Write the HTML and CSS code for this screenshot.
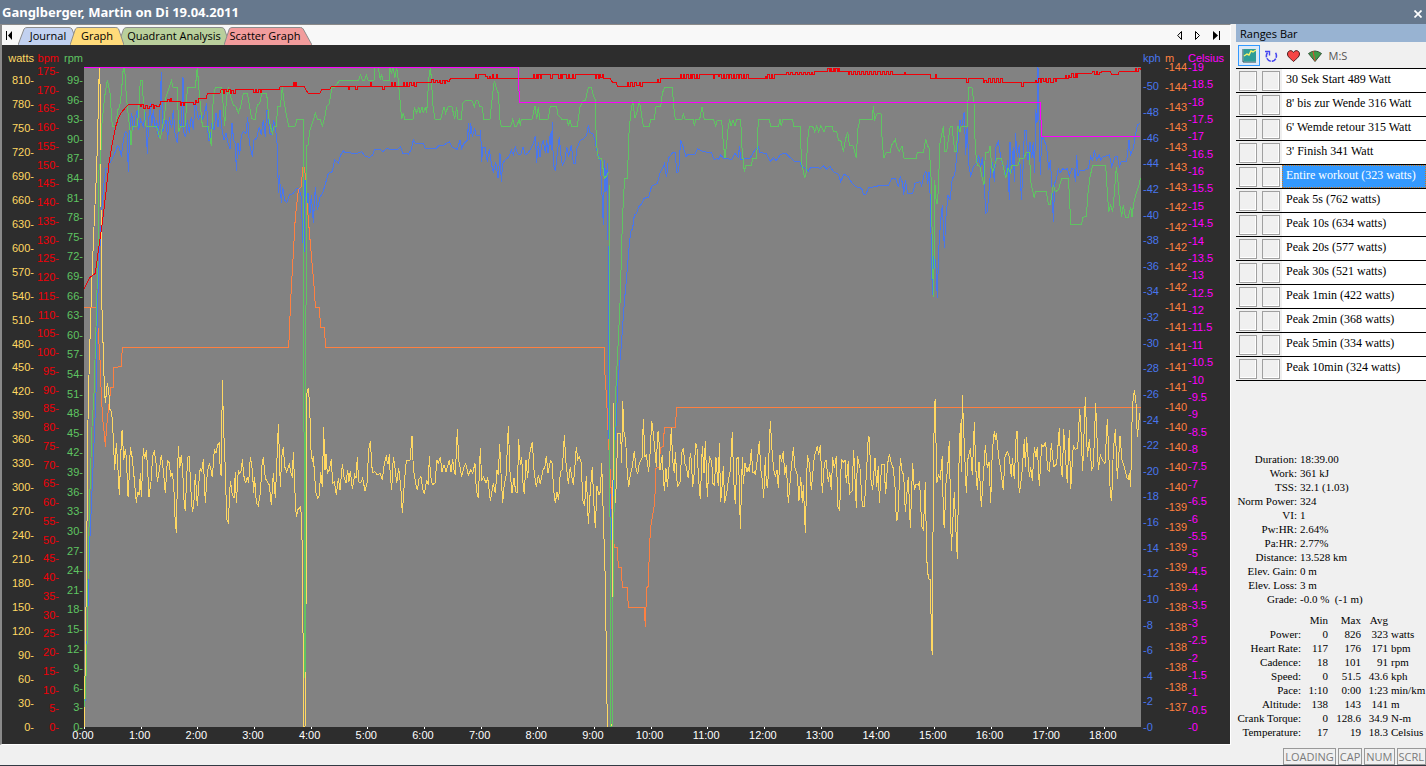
FILE: index.html
```html
<!DOCTYPE html>
<html lang="en">
<head>
  <meta charset="UTF-8">
  <meta name="viewport" content="width=device-width, initial-scale=1.0">
  <title>Ganglberger, Martin on Di 19.04.2011</title>
  <link rel="stylesheet" href="styles.css">
</head>
<body>

  <header class="titlebar">
    <h1>Ganglberger, Martin on Di 19.04.2011</h1>
    <button class="close" aria-label="Close">
      <svg width="8" height="8" viewBox="0 0 8 8"><path d="M0.5 0.5 L7.5 7.5 M7.5 0.5 L0.5 7.5" stroke="#fff" stroke-width="1.7"/></svg>
    </button>
  </header>

  <div class="workspace">
    <main class="panel">
      <nav class="tabbar">
        <button class="nav-btn first" aria-label="First tab">
          <svg width="7" height="9" viewBox="0 0 7 9"><path d="M0 0h1v9H0zM6 0v9L2 4.500z" fill="#000"/></svg>
        </button>
        <button class="tab journal"><svg viewBox="0 0 100 18" preserveAspectRatio="none"><path d="M0 18 L10 2 Q12 0.500 15 0.500 H85 Q88 0.500 90 2 L100 18"/></svg><span>Journal</span></button>
        <button class="tab graph"><svg viewBox="0 0 100 18" preserveAspectRatio="none"><path d="M0 18 L10 2 Q12 0.500 15 0.500 H85 Q88 0.500 90 2 L100 18"/></svg><span>Graph</span></button>
        <button class="tab quadrant"><svg viewBox="0 0 100 18" preserveAspectRatio="none"><path d="M0 18 L5 2 Q6 0.500 8 0.500 H92 Q94 0.500 95 2 L100 18"/></svg><span>Quadrant Analysis</span></button>
        <button class="tab scatter"><svg viewBox="0 0 100 18" preserveAspectRatio="none"><path d="M0 18 L6 2 Q7 0.500 9 0.500 H87 Q89 0.500 90 2 L100 18"/></svg><span>Scatter Graph</span></button>
        <div class="tab-scroll">
          <button class="nav-btn" aria-label="Previous tab">
            <svg width="6" height="9" viewBox="0 0 6 9"><path d="M4.500 0.500v8L0.700 4.500z" fill="none" stroke="#000"/></svg>
          </button>
          <button class="nav-btn" aria-label="Next tab">
            <svg width="6" height="9" viewBox="0 0 6 9"><path d="M0.500 0.500v8L4.500 4.500z" fill="none" stroke="#000"/></svg>
          </button>
          <button class="nav-btn" aria-label="Last tab">
            <svg width="7" height="9" viewBox="0 0 7 9"><path d="M6 0h1v9H6zM0 0v9L5 4.500z" fill="#000"/></svg>
          </button>
        </div>
      </nav>

      <div class="chart">
        <div class="axes left">
          <div class="axis watts"><div class="unit">watts</div><div class="scale" id="watts"></div></div>
          <div class="axis bpm"><div class="unit">bpm</div><div class="scale" id="bpm"></div></div>
          <div class="axis rpm"><div class="unit">rpm</div><div class="scale" id="rpm"></div></div>
        </div>

        <svg class="plot" viewBox="0 0 3171 1980" preserveAspectRatio="none">
          <!-- 0:00 to 6:10 -->
          <g transform="translate(-12 -21)">
            <polyline class="altitude" points="12,742 52,742 52,770 60,900 62,960 66,1040 70,1100 73,1120 76,1160 80,1100 86,1040 91,1000 91,982 100,982 102,922 124,920 127,862 626,862 628,820 632,720 640,580 646,470 655,390 664,380 668,322 674,322 678,390 686,490 692,562 697,620 704,700 706,742 718,742 722,802 734,802 736,862 1050,862"/>
            <polyline class="speed" points="14,1950 18,1850 26,1570 30,1430 38,1250 48,1000 52,760 56,640 62,520 66,440 72,370 78,325 84,325 88,310 95,300 104,280 113,258 118,262 124,290 130,240 136,215 141,218 145,335 150,200 155,158 160,210 167,170 172,150 176,210 182,180 190,200 196,155 202,283 206,180 211,130 215,200 220,150 225,205 230,180 235,230 240,150 244,35 248,215 254,195 258,180 263,240 268,170 275,205 280,150 285,220 292,250 297,180 304,205 309,50 312,220 317,232 322,180 328,218 334,170 340,210 345,130 350,145 355,180 360,165 366,180 372,165 380,130 385,240 390,240 396,190 402,210 408,160 414,200 420,150 426,208 432,240 438,220 444,250 451,268 456,190 461,240 466,250 469,332 474,250 479,285 484,225 490,215 498,220 503,170 508,250 517,290 522,240 530,235 538,200 544,225 550,180 556,230 560,150 565,150 568,220 576,225 580,180 586,200 592,260 595,400 598,345 604,428 608,380 614,420 620,428 628,405 640,400 650,385 656,385 664,410 668,540 672,580 675,360 680,440 684,400 690,460 694,405 700,488 706,380 712,450 720,410 728,400 735,375 745,340 757,335 764,300 775,310 782,285 790,272 795,278 830,280 846,275 853,287 868,292 878,285 884,268 900,268 908,275 920,266 950,270 962,260 968,280 985,282 994,268 1000,240 1006,250 1030,250 1035,265 1050,265"/>
            <polyline class="power" points="12,2001 16,1800 20,1490 24,1080 28,900 36,650 42,500 48,370 52,260 56,100 58,20 61,95 63,440 65,720 67,780 73,980 76,1030 82,970 86,990 90,1048 95,1055 100,1135 104,1230 109,1150 113,1210 118,1305 125,1115 127,1113 131,1200 136,1168 140,1200 143,1305 145,1310 151,1160 157,1195 163,1260 169,1328 173,1295 177,1305 181,1240 184,1312 190,1165 194,1198 199,1170 203,1230 207,1310 213,1265 218,1188 223,1175 228,1210 232,1265 238,1230 244,1185 250,1230 256,1300 262,1203 268,1208 272,1250 276,1240 281,1270 285,1370 289,1420 292,1270 295,1158 299,1225 304,1185 308,1230 313,1340 316,1352 320,1250 324,1190 328,1190 332,1280 337,1357 341,1340 346,1242 352,1338 358,1250 361,1223 365,1235 370,1198 376,1328 382,1235 388,1210 392,1225 397,1252 403,1170 408,1180 413,1155 418,1150 421,1240 424,1245 427,960 431,1110 436,1230 440,1378 445,1388 451,1262 457,1305 462,1315 466,1235 469,1330 475,1230 479,1240 484,1230 487,1198 491,1245 497,1270 502,1250 506,1268 511,1190 517,1230 521,1298 524,1252 529,1328 535,1337 541,1300 547,1200 550,1195 556,1255 562,1265 568,1275 574,1335 580,1240 586,1315 592,1170 595,1093 598,1180 601,1282 605,1190 610,1160 614,1220 620,1235 628,1213 634,1245 637,1250 640,1175 644,1280 649,1372 653,1350 661,1342 665,1370 668,1565 671,2001 675,2001 679,1515 681,1000 685,983 689,1040 693,1170 697,1205 700,1188 704,1250 708,1300 713,1315 718,1305 722,1235 727,1280 731,1102 735,1230 738,1182 742,1240 748,1230 754,1198 758,1270 763,1265 769,1305 775,1255 780,1290 787,1213 792,1250 798,1270 803,1230 807,1265 811,1232 817,1288 824,1245 828,1255 832,1192 836,1265 842,1268 848,1255 855,1292 861,1270 866,1170 871,1143 877,1238 885,1235 891,1245 900,1240 907,1260 913,1210 919,1186 922,1210 925,1210 928,1183 931,1250 935,1290 940,1190 946,1230 950,1270 956,1225 962,1275 967,1360 973,1270 979,1200 990,1200 996,1128 1000,1225 1007,1270 1012,1290 1017,1258 1023,1250 1028,1285 1033,1303 1040,1260 1045,1275 1048,1187 1050,1220"/>
            <polyline class="cadence" points="14,1940 18,1850 22,1720 24,1560 28,1350 36,1100 42,1000 48,800 54,580 57,330 62,300 66,190 74,110 82,60 90,100 97,200 108,198 113,150 119,140 124,100 130,22 134,22 139,110 145,170 150,210 153,255 157,200 172,198 176,150 181,62 187,62 190,130 197,198 230,200 241,238 247,200 254,170 258,110 274,62 279,82 292,82 296,215 302,200 316,198 322,83 346,82 352,22 357,90 367,198 385,200 394,258 400,110 406,83 424,83 427,100 434,198 440,110 446,82 452,110 460,135 468,140 475,160 482,140 490,100 502,100 508,135 515,175 525,180 532,135 539,130 545,100 560,100 566,170 571,198 577,220 583,198 589,198 593,140 601,140 607,82 613,130 622,180 626,200 646,198 650,178 670,178 671,1100 673,1130 675,1855 677,1000 680,255 684,255 690,210 700,180 706,160 712,178 720,178 727,198 733,178 740,140 748,130 756,82 763,82 778,62 836,60 842,44 847,60 854,60 859,44 864,60 882,60 885,22 895,22 901,60 904,42 909,60 928,60 930,22 934,40 940,22 944,55 950,22 955,62 960,120 965,178 970,160 974,178 999,178 1003,140 1010,160 1016,140 1020,160 1026,140 1030,160 1036,140 1040,160 1046,60 1051,22"/>
            <path class="heart" d="M12 686L30 652L46 640L54 580L61 530L68 480L78 395L87 310L97 250L107 200L115 175L124 158L134 146L145 133H180v6h5v-6h5v12h5v-10h6v10h6v-6h6v-6h6v12h5v-8h6v2h8v-6h4v-8H262v-8h5v8h4v-10h4v10H300v10h4v-8h6v8h4v-8h6v-1H340v6h5v-10h5v6h4v-12H378L383 100H420L424 88h5v12h5v-12h6v6h5v-6h5v12h5v-8h5v8h6v-12H520v10h5v-10h5v10h5v-10h5v8h5v-8H598L601 79H640V67h3v12h3v-12h4v12H672L684 100H720L725 88H750L754 79H805v9h4v-9h18v9h4v-9H870V68h4v11H908v9h4v-9H934V68h4v11h4v-11h5v11H970v-11h4v11h4v-11h5v11h6v-11h4v8h6v-8h5v11h6v-11H1050"/>
            <path class="temperature" d="M12 22H1050"/>
          </g>
          <!-- 6:10 to 12:20 -->
          <g transform="translate(1038 -21)">
            <polyline class="altitude" points="0,862 522,862 524,930 530,1020 534,1110 538,1190 544,1300 550,1435 553,1462 562,1462 565,1522 574,1522 577,1582 592,1582 595,1642 643,1642 646,1702 648,1642 650,1582 655,1580 658,1470 662,1400 674,1330 678,1225 688,1222 691,1162 700,1160 703,1102 736,1102 740,1042 1050,1042"/>
            <polyline class="speed" points="0,265 18,265 25,258 40,256 50,250 58,245 66,262 82,268 90,240 95,265 102,250 112,240 115,190 119,240 122,190 127,230 134,205 138,225 150,225 152,210 155,305 158,262 165,262 172,305 178,268 184,310 190,338 197,305 204,355 210,280 214,365 218,310 228,297 236,292 244,270 250,285 256,262 263,282 272,285 279,260 286,285 295,278 304,262 310,250 316,228 320,308 325,245 330,290 335,255 340,240 346,280 350,240 354,280 361,220 364,270 367,185 370,315 376,333 383,270 388,230 392,280 397,315 405,300 410,260 416,290 424,255 430,310 436,310 440,268 450,242 460,236 470,225 475,195 480,218 488,220 494,235 500,270 510,300 515,380 520,495 524,300 528,395 532,310 534,540 535,900 538,1250 542,1350 546,1440 552,1180 558,1100 564,960 572,880 584,715 590,650 596,575 602,515 608,505 613,465 620,460 626,440 636,430 642,415 656,412 665,378 682,370 690,340 703,312 710,352 715,295 728,278 736,278 740,338 746,335 752,240 760,262 768,290 775,282 795,282 803,266 820,275 844,278 853,300 860,295 866,298 872,285 880,295 905,298 915,280 925,292 928,258 933,300 945,295 960,295 975,270 985,260 990,278 1008,280 1014,292 1022,305 1030,292 1038,303 1050,285"/>
            <polyline class="power" points="0,1220 4,1265 8,1273 15,1270 21,1200 25,1210 31,1190 36,1235 42,1215 48,1235 54,1215 58,1200 63,1235 68,1197 72,1230 76,1245 82,1108 86,1200 90,1220 95,1250 102,1220 107,1210 115,1245 122,1230 128,1240 135,1210 139,1290 145,1315 151,1165 155,1260 161,1250 168,1270 173,1252 181,1322 190,1270 196,1300 201,1230 205,1245 209,1153 213,1240 218,1328 223,1270 228,1250 235,1098 240,1235 246,1298 252,1255 257,1295 262,1298 266,1138 271,1215 275,1190 279,1270 283,1303 288,1200 293,1255 298,1185 307,1145 312,1230 319,1282 325,1245 331,1272 340,1225 344,1225 349,1187 354,1238 361,1203 366,1208 371,1290 376,1330 381,1295 386,1320 391,1235 397,1228 403,1126 408,1210 415,1272 421,1220 425,1250 430,1275 435,1215 439,1160 443,1200 448,1190 454,1208 458,1320 464,1337 469,1247 475,1393 481,1290 487,1220 491,1320 496,1405 501,1278 507,1305 511,1295 515,1208 520,1370 526,1565 532,2001 546,2001 548,1515 550,1028 553,1355 559,1275 563,1120 572,1122 575,1210 578,1022 582,1115 587,1140 591,1225 596,1282 601,1245 607,1220 613,1172 618,1225 623,1243 628,1210 636,1195 640,1078 645,1190 649,1185 656,1235 661,1170 665,1083 670,1120 674,1165 679,1220 683,1117 686,1115 690,1230 697,1185 700,1250 703,1293 708,1225 712,1280 718,1210 724,1105 728,1200 733,1240 736,1175 742,1280 750,1268 755,1180 760,1165 765,1212 769,1220 775,1255 781,1180 784,1200 788,1282 792,1245 797,1148 801,1165 806,1260 811,1318 817,1158 822,1240 826,1142 832,1312 838,1190 845,1203 849,1270 853,1275 858,1192 862,1250 865,1278 868,1150 872,1325 877,1270 880,1217 884,1328 890,1300 895,1262 901,1230 907,1117 911,1260 916,1333 921,1195 925,1192 928,1270 931,1408 937,1192 940,1272 945,1210 951,1235 955,1222 958,1237 964,1168 968,1238 973,1235 976,1245 982,1200 988,1143 992,1225 997,1260 1001,1315 1006,1190 1009,1275 1013,1283 1018,1155 1021,1083 1026,1170 1031,1230 1036,1250 1041,1230 1045,1285 1050,1185"/>
            <polyline class="cadence" points="0,22 4,50 8,130 15,178 32,178 42,140 47,160 54,140 66,140 74,178 80,140 84,178 94,178 98,130 106,122 126,122 133,140 138,122 144,122 150,140 156,140 162,178 180,178 188,100 193,62 198,82 205,100 210,180 214,200 242,200 248,178 254,198 260,198 268,178 271,198 274,178 306,178 315,138 320,178 325,140 329,178 354,178 361,140 380,140 384,165 396,178 412,178 415,198 420,180 425,198 442,198 450,140 460,122 466,122 475,82 484,82 488,100 496,120 499,250 505,295 515,295 523,355 528,350 534,338 537,338 538,1100 541,1500 542,2001 546,2001 548,1700 556,1020 562,900 571,710 575,550 580,420 584,355 592,355 597,220 602,160 608,122 615,175 620,160 628,122 634,160 640,198 658,198 662,178 673,178 678,140 692,140 697,100 704,82 727,82 731,140 736,178 756,178 760,160 765,178 790,178 793,198 797,178 809,178 816,140 823,178 850,178 857,198 862,180 875,180 880,250 885,295 890,250 895,198 899,178 903,198 909,180 915,198 920,178 932,178 936,265 943,335 947,317 964,317 968,295 980,295 985,178 1018,178 1022,198 1046,198 1050,178"/>
            <path class="heart" d="M0 67h4v-10h6v10h6v-6h6v6h5v-6h5v8h5v-8h5v8h5v-8h5v4h5v-6h5v-4H136V44h4v11h6v-11H165v5h6v6H178v-6h4v6h4v-11h4v11h8v-11h5v11H310V44h4v11h4v-11h4v11h4v-11h4v11h4v-11h28v11h4v-11h20v11h4v-11h4v11h4v-11h12v11h4v-11h4v11h8v-11h4v11h6v-11H496v11h4v-11h4v11h4v-11h4v8h4v-8h4v11H540L548 67H558L563 79H592V67h4v12h4v-12h8v12h6v-12h5v8h8v-8h5v12h5v-12H682v-10h4v10h4v-12H750V44h4v11h6v-11h4v11h6v-11h4v11h6v-11h4v11h4v-11h4v11h6v-11h4v11h6v-11H850v11h4v-11h10v6h5v-6h5v11h5v-11h5v11h5v-11h5v11h5v-11h5v11h5v-11h5v11h5v-11h5v11h5v-11h5v11h5v-11h5v11h5v-11h5v11H1005v-6h4v6h4v-11h5v11h6v-11h4v11h4v-11H1050"/>
            <path class="temperature" d="M0 22H265L268 127H1050"/>
          </g>
          <!-- 12:20 to 18:39 -->
          <g transform="translate(2088 -21)">
            <path class="altitude" d="M0 1042H1083"/>
            <polyline class="speed" points="0,283 18,280 30,292 42,303 60,305 66,322 78,325 85,333 92,322 110,322 122,325 130,318 140,328 150,318 160,335 175,342 182,365 192,342 205,350 215,368 228,380 245,385 250,402 258,402 266,382 290,380 295,375 325,375 335,356 347,356 355,382 361,350 368,370 371,405 376,360 383,400 398,402 405,370 412,368 420,365 425,378 432,345 438,335 443,372 447,335 450,400 453,520 457,705 462,590 467,600 472,715 476,570 482,480 487,435 493,565 498,470 504,405 510,420 517,355 524,345 530,290 536,230 540,180 545,200 553,155 557,285 562,190 566,310 572,350 580,320 590,310 596,285 602,320 607,290 612,350 617,460 622,455 628,380 632,330 638,305 643,365 648,260 655,245 662,290 670,320 676,350 683,300 688,420 690,245 694,340 700,260 703,365 706,220 712,290 718,255 724,420 730,310 733,210 738,210 744,300 750,245 755,295 760,245 764,340 767,148 771,190 774,22 777,180 781,345 785,230 792,240 800,260 806,330 811,300 816,380 820,485 824,370 830,355 835,325 840,340 848,325 855,330 862,325 868,348 876,325 883,330 886,365 890,285 894,348 900,330 915,330 925,325 932,290 938,300 943,270 950,300 958,285 962,300 970,290 988,285 995,320 1005,290 1012,290 1018,320 1024,303 1040,305 1047,240 1051,285 1060,265 1066,225 1072,195 1080,190"/>
            <polyline class="power" points="0,1185 5,1205 10,1173 14,1245 19,1215 25,1328 32,1245 40,1162 45,1225 52,1245 57,1322 62,1250 67,1328 70,1275 76,1418 82,1185 88,1210 94,1290 103,1190 112,1158 116,1185 121,1155 127,1300 133,1210 138,1200 145,1265 149,1235 154,1290 158,1192 163,1225 169,1187 174,1340 179,1352 184,1198 190,1208 195,1200 199,1270 205,1202 208,1302 216,1293 221,1170 229,1345 232,1188 240,1225 247,1338 253,1340 259,1245 265,1128 268,1135 273,1260 278,1290 285,1193 290,1282 295,1217 298,1328 305,1212 312,1212 317,1303 323,1210 328,1183 334,1210 340,1225 345,1280 349,1382 353,1378 358,1270 361,1195 367,1240 371,1240 376,1357 385,1250 391,1405 398,1210 403,1290 408,1272 415,1275 419,1267 425,1400 430,1410 436,1267 440,1495 445,1555 451,1560 455,1760 457,1784 458,1550 461,1170 464,1025 466,1022 470,1270 475,1245 481,1255 487,1187 490,1370 493,1405 498,1270 503,1225 508,1143 512,1365 514,1472 518,1390 523,1297 527,1395 532,1496 536,1240 541,1090 544,1235 547,1005 551,1110 556,1230 559,1300 563,1200 571,1165 577,1245 583,1087 587,1220 592,1290 597,1205 604,1340 610,1250 616,1155 622,1225 627,1205 632,1328 637,1170 643,1113 646,1140 649,1120 656,1190 661,1220 670,1290 675,1190 682,1175 688,1190 694,1252 697,1195 703,1257 709,1113 712,1114 715,1250 718,1300 725,1250 733,1138 736,1222 740,1132 748,1250 752,1220 757,1262 763,1162 768,1190 772,1162 778,1277 785,1155 790,1160 797,1147 803,1230 808,1233 814,1150 821,1220 830,1212 838,1103 842,1210 847,1252 851,1108 857,1200 862,1270 868,1110 872,1288 880,1155 885,1168 893,1165 899,1048 903,1115 908,1233 916,1012 922,1190 928,1138 935,1228 940,1220 947,1030 950,1110 955,1230 961,1185 967,1200 975,1210 982,1078 987,1200 991,1305 995,1322 1000,1170 1006,1108 1012,1258 1020,1127 1026,1200 1033,1220 1040,1252 1045,1258 1048,1238 1052,1280 1057,1040 1063,990 1068,1030 1072,1132 1079,1060"/>
            <polyline class="cadence" points="0,178 4,198 8,178 38,178 41,198 60,198 65,310 74,355 78,340 83,240 88,198 98,200 104,215 110,198 116,215 122,198 132,215 138,198 157,198 160,215 170,215 175,240 182,240 190,275 196,240 203,215 208,255 220,258 229,295 233,210 240,178 277,178 280,138 284,178 292,160 303,160 306,230 311,295 318,278 330,278 335,255 346,238 350,258 358,275 366,258 372,295 409,295 412,278 430,278 437,238 443,258 448,265 453,350 458,600 460,710 463,590 464,360 469,430 473,430 480,250 490,198 495,275 500,275 511,198 516,198 524,275 529,275 534,198 540,215 544,198 562,198 565,83 576,83 582,130 586,270 592,315 600,320 606,350 612,375 616,278 626,278 630,258 637,338 643,320 650,295 664,295 670,320 677,355 684,325 692,340 694,315 714,315 720,295 732,295 738,278 748,278 753,370 763,415 766,395 799,395 805,432 811,432 820,375 826,395 835,390 845,355 865,355 868,400 872,493 905,493 908,472 919,470 924,400 930,350 938,317 977,317 981,380 986,455 992,435 998,455 1003,400 1009,320 1014,365 1019,430 1025,470 1030,435 1036,472 1045,472 1052,440 1056,470 1061,430 1070,395 1076,380 1081,355"/>
            <path class="heart" d="M0 44H20v-8h6v8h6v-8h6v6h8v-6h6v8h6v-8h6v8h6v-8h6v8h6v-8h6v8h6v-8h4v8h4V34H143V24h4v10h4v-10h4v10h4v-10h4v10h4v-10h4v10h4v-10h4v10H205v10h4v-10h6v10h6v-10h6v10h6v-10h6v10h6v-10h6v10h6v-10h6v10h6v-10h6v10h6v-10h6v10h6v-10h8v10h6v-10h6v10h6v-10h6v10h6v-10h6v10H372v-8h4v8H452v11h14v-12h4v12H560v12h4v-12H610v12h4v-6h6v6h6v-12h6v12h6v-12h6v12h6v-12h6v12h6v-12h6v12H725v11h4v-11H765v-6h5v6h5v-12h5v12h5v-12h5v10h5v-10h5v12h5v-12h5v12h10v-12h6v10h4v-10H855v-10h5v10h4v-10h5v6h5v-10h5v10h6v-10h4v10h4v-11H935L938 34h5v10h5v-10h5v10h6v-8h6v-2H990L995 44H1014L1018 34H1065V24h5v10h4v-10h6v6"/>
            <path class="temperature" d="M0 127H781L785 230H1080"/>
          </g>
        </svg>

        <div class="axes right">
          <div class="axis kph"><div class="unit">kph</div><div class="scale" id="kph"></div></div>
          <div class="axis meters"><div class="unit">m</div><div class="scale" id="meters"></div></div>
          <div class="axis celsius"><div class="unit">Celsius</div><div class="scale" id="celsius"></div></div>
        </div>

        <div class="time-axis" id="time"></div>
      </div>
    </main>

    <aside class="sidebar">
      <h2>Ranges Bar</h2>
      <div class="toolbar">
        <button class="tool active" aria-label="Chart">
          <svg width="14" height="14" viewBox="0 0 14 14"><path d="M1 0v13h13" fill="none" stroke="#27474f"/><path d="M1.500 0H14v12.500H1.500z" fill="#2f9c98"/><path d="M2 7l3-2 2 1 2-4 2 1 3-2" fill="none" stroke="#f6f36a" stroke-width="1.400"/></svg>
        </button>
        <button class="tool" aria-label="Refresh">
          <svg width="13" height="13" viewBox="0 0 13 13"><path d="M2.500 3.500C-.5 8 3 12.300 6.500 12.300S13 8 10.500 3.500" fill="none" stroke="#4646f0" stroke-width="1.600" stroke-dasharray="5 1"/><path d="M0 2.500h4.500v4" fill="none" stroke="#4646f0" stroke-width="1.400"/></svg>
        </button>
        <button class="tool" aria-label="Heart rate">
          <svg width="13" height="12" viewBox="0 0 13 12"><path d="M6.500 2.500C5-.5.5.3.5 4c0 3 3 4.500 6 7.500 3-3 6-4.500 6-7.500 0-3.700-4.500-4.500-6-1.500z" fill="#f64545" stroke="#4c2020"/></svg>
        </button>
        <button class="tool" aria-label="Zones">
          <svg width="14" height="12" viewBox="0 0 14 12"><path d="M0.500 3.500Q7-1.500 13.500 3.500L7 11.500z" fill="#3e9c48" stroke="#35553a"/><path d="M7 11L5 1" stroke="#d84a35"/></svg>
        </button>
        <button class="tool text">M:S</button>
      </div>

      <ul class="ranges">
        <li><input type="checkbox" aria-label="Show"><input type="checkbox" aria-label="Mark"><button>30 Sek Start 489 Watt</button></li>
        <li><input type="checkbox" aria-label="Show"><input type="checkbox" aria-label="Mark"><button>8' bis zur Wende 316 Watt</button></li>
        <li><input type="checkbox" aria-label="Show"><input type="checkbox" aria-label="Mark"><button>6' Wemde retour 315 Watt</button></li>
        <li><input type="checkbox" aria-label="Show"><input type="checkbox" aria-label="Mark"><button>3' Finish 341 Watt</button></li>
        <li><input type="checkbox" aria-label="Show"><input type="checkbox" aria-label="Mark"><button class="selected">Entire workout (323 watts)</button></li>
        <li><input type="checkbox" aria-label="Show"><input type="checkbox" aria-label="Mark"><button>Peak 5s (762 watts)</button></li>
        <li><input type="checkbox" aria-label="Show"><input type="checkbox" aria-label="Mark"><button>Peak 10s (634 watts)</button></li>
        <li><input type="checkbox" aria-label="Show"><input type="checkbox" aria-label="Mark"><button>Peak 20s (577 watts)</button></li>
        <li><input type="checkbox" aria-label="Show"><input type="checkbox" aria-label="Mark"><button>Peak 30s (521 watts)</button></li>
        <li><input type="checkbox" aria-label="Show"><input type="checkbox" aria-label="Mark"><button>Peak 1min (422 watts)</button></li>
        <li><input type="checkbox" aria-label="Show"><input type="checkbox" aria-label="Mark"><button>Peak 2min (368 watts)</button></li>
        <li><input type="checkbox" aria-label="Show"><input type="checkbox" aria-label="Mark"><button>Peak 5min (334 watts)</button></li>
        <li><input type="checkbox" aria-label="Show"><input type="checkbox" aria-label="Mark"><button>Peak 10min (324 watts)</button></li>
      </ul>

      <div class="stats">
        <dl class="summary">
          <dt>Duration:</dt><dd>18:39.00</dd>
          <dt>Work:</dt><dd>361 kJ</dd>
          <dt>TSS:</dt><dd>32.1 (1.03)</dd>
          <dt>Norm Power:</dt><dd>324</dd>
          <dt>VI:</dt><dd>1</dd>
          <dt>Pw:HR:</dt><dd>2.64%</dd>
          <dt>Pa:HR:</dt><dd>2.77%</dd>
          <dt>Distance:</dt><dd>13.528 km</dd>
          <dt>Elev. Gain:</dt><dd>0 m</dd>
          <dt>Elev. Loss:</dt><dd>3 m</dd>
          <dt>Grade:</dt><dd>-0.0 %&nbsp; (-1 m)</dd>
        </dl>
        <table class="minmax">
          <colgroup><col class="name"><col class="min"><col class="max"><col class="avg"><col></colgroup>
          <tr><th></th><th>Min</th><th>Max</th><th>Avg</th><th></th></tr>
          <tr><th>Power:</th><td>0</td><td>826</td><td>323</td><td>watts</td></tr>
          <tr><th>Heart Rate:</th><td>117</td><td>176</td><td>171</td><td>bpm</td></tr>
          <tr><th>Cadence:</th><td>18</td><td>101</td><td>91</td><td>rpm</td></tr>
          <tr><th>Speed:</th><td>0</td><td>51.5</td><td>43.6</td><td>kph</td></tr>
          <tr><th>Pace:</th><td>1:10</td><td>0:00</td><td>1:23</td><td>min/km</td></tr>
          <tr><th>Altitude:</th><td>138</td><td>143</td><td>141</td><td>m</td></tr>
          <tr><th>Crank Torque:</th><td>0</td><td>128.6</td><td>34.9</td><td>N-m</td></tr>
          <tr><th>Temperature:</th><td>17</td><td>19</td><td>18.3</td><td>Celsius</td></tr>
        </table>
      </div>
    </aside>
  </div>

  <footer class="statusbar">
    <span>LOADING</span>
    <span>CAP</span>
    <span>NUM</span>
    <span>SCRL</span>
  </footer>

  <script>
    // each tick fills the stretch up to the next one, its label sits on the low edge
    function drawScale(id, step, max, getLabel) {
      const scale = document.getElementById(id);
      for (let value = 0; value <= max; value += step) {
        const tick = document.createElement('div');
        tick.className = 'tick';
        tick.style.flexGrow = Math.min(step, max - value);
        tick.innerHTML = `<span>${getLabel(value)}</span>`;
        scale.appendChild(tick);
      }
    }

    drawScale('watts', 30, 826, v => v + '-');
    drawScale('bpm', 5, 176, v => v + '-');
    drawScale('rpm', 3, 101, v => v + '-');
    drawScale('kph', 2, 51.5, v => '-' + v);
    drawScale('meters', 1, 33, v => v === 0 ? '' : '-' + Math.floor(137 + (v + 3) / 5));
    drawScale('celsius', 0.5, 19, v => '-' + v);
    drawScale('time', 1, 18.65, v => v + ':00');
  </script>

</body>
</html>
```
FILE: styles.css
```css
* {
  box-sizing: border-box;
}

body {
  margin: 0;
  height: 100vh;
  display: flex;
  flex-direction: column;
  background-color: #f0f0f0;
  font-family: "Liberation Sans", Arial, sans-serif;
  font-size: 11px;
  overflow: hidden;
}

button {
  border: none;
  background: none;
  padding: 0;
  margin: 0;
  font: inherit;
  color: inherit;
  cursor: pointer;
}

.titlebar {
  display: flex;
  justify-content: space-between;
  align-items: center;
  flex: none;
  height: 24px;
  padding: 0 4px 0 2px;
  background-color: #66788d;
  color: #fff;
}

.titlebar h1 {
  margin: 0;
  font-family: "Noto Sans", sans-serif;
  font-size: 13px;
  font-weight: 700;
  line-height: 24px;
}

.close {
  display: flex;
  padding-top: 4px;
}

.workspace {
  flex: 1;
  min-height: 0;
  display: flex;
  gap: 5px;
}

.panel {
  flex: 1;
  min-width: 0;
  display: flex;
  flex-direction: column;
  border-top: 1px solid #8a8a8a;
  border-left: 2px solid #8a8a8a;
  border-right: 1px solid #fff;
  border-bottom: 1px solid #fff;
}

/* tabs */
.tabbar {
  display: flex;
  align-items: flex-end;
  flex: none;
  height: 20px;
  background-color: #f8f8f8;
  font-family: "Open Sans", sans-serif;
  font-size: 11px;
}

.nav-btn {
  display: flex;
  align-items: center;
  height: 20px;
}

.nav-btn.first {
  width: 16px;
  padding-left: 4px;
}

.tab {
  position: relative;
  height: 18px;
  margin-right: -8px;
  line-height: 18px;
}

.tab svg {
  position: absolute;
  left: 0;
  top: 0;
  width: 100%;
  height: 100%;
}

.tab svg path {
  stroke: #8c8c8c;
  vector-effect: non-scaling-stroke;
}

.tab span {
  position: relative;
}

.journal {
  width: 60px;
}

.graph {
  z-index: 1;
  width: 54px;
  margin-right: -6px;
}

.quadrant {
  width: 112px;
  margin-right: -6px;
}

.scatter {
  width: 88px;
  padding-right: 6px;
}

.journal path {
  fill: #c2d1f0;
}

.graph path {
  fill: #ffdb7a;
}

.quadrant path {
  fill: #b9cf9c;
}

.scatter path {
  fill: #f29c9c;
}

.tab-scroll {
  display: flex;
  gap: 12px;
  margin-left: auto;
  padding-right: 10px;
}

/* chart */
.chart {
  flex: 1;
  min-height: 0;
  display: grid;
  grid-template-columns: 82px 1fr 89px;
  grid-template-rows: 22px 1fr 17px;
  background-color: #2d2d2d;
}

.plot {
  grid-column: 2;
  grid-row: 2;
  width: 100%;
  height: 100%;
  background-color: #828282;
}

.plot polyline,
.plot path {
  fill: none;
  stroke-width: 1px;
  shape-rendering: crispEdges;
  vector-effect: non-scaling-stroke;
}

.plot .altitude {
  stroke: #ff8040;
}

.plot .speed {
  stroke: #4876ee;
}

.plot .power {
  stroke: #ffd862;
}

.plot .cadence {
  stroke: #5fc462;
}

.plot .heart {
  stroke: #f00008;
}

.plot .temperature {
  stroke: #ff00ff;
}

.axes {
  grid-row: 1 / 3;
  display: flex;
}

.left {
  grid-column: 1;
  text-align: right;
}

.right {
  grid-column: 3;
  padding-left: 2px;
}

.axis {
  display: flex;
  flex-direction: column;
}

.unit {
  height: 22px;
  padding-top: 6px;
  line-height: 14px;
}

.scale {
  flex: 1;
  min-height: 0;
  display: flex;
  flex-direction: column-reverse;
}

.scale .tick {
  flex: 0 0 0;
  display: flex;
  flex-direction: column;
  justify-content: flex-end;
  min-height: 0;
}

.scale .tick span {
  flex: none;
  line-height: 14px;
  margin-bottom: -7px;
}

.watts {
  width: 32px;
  color: #ffd862;
}

.bpm {
  width: 25px;
  color: #f00008;
}

.rpm {
  width: 24px;
  color: #5fc462;
}

.kph {
  width: 22px;
  color: #4876ee;
}

.meters {
  width: 23px;
  color: #ff8040;
}

.celsius {
  color: #ff00ff;
}

.time-axis {
  grid-column: 2;
  grid-row: 3;
  display: flex;
  color: #fff;
}

.time-axis .tick {
  flex: 0 0 0;
  min-width: 0;
  border-left: 1px solid #fff;
  height: 2px;
}

.time-axis .tick span {
  display: block;
  width: 40px;
  margin-left: -22px;
  line-height: 17px;
  text-align: center;
}

/* ranges bar */
.sidebar {
  flex: none;
  width: 190px;
  display: flex;
  flex-direction: column;
  overflow: hidden;
  font-family: "Liberation Serif", "Times New Roman", serif;
}

.sidebar h2 {
  flex: none;
  margin: 0;
  padding-left: 4px;
  height: 18px;
  background-color: #98b3d2;
  font-family: "Open Sans", sans-serif;
  font-size: 11px;
  font-weight: 400;
  line-height: 20px;
}

.toolbar {
  flex: none;
  display: flex;
  height: 26px;
  padding: 3px 2px 0;
}

.tool {
  display: flex;
  align-items: center;
  justify-content: center;
  width: 22px;
  height: 21px;
}

.tool.active {
  border: 1px solid #3399ff;
  background-color: #dce9f7;
}

.tool.text {
  width: 24px;
  color: #555;
  font-family: "Open Sans", sans-serif;
}

.ranges {
  flex: none;
  list-style: none;
  margin: 0;
  padding: 0;
  border-bottom: 1px solid #000;
  font-size: 12px;
}

.ranges li {
  display: flex;
  align-items: center;
  gap: 5px;
  height: 24px;
  padding-left: 3px;
  border-top: 1px solid #000;
}

.ranges input {
  appearance: none;
  flex: none;
  width: 18px;
  height: 20px;
  margin: 0;
  background-color: #f0f0f0;
  border: 1px solid #a0a0a0;
  box-shadow: inset -1px -1px 0 #fff;
}

.ranges button {
  flex: 1;
  height: 23px;
  margin-left: -3px;
  padding: 0 0 2px 4px;
  background-color: #fff;
  text-align: left;
  white-space: nowrap;
}

.ranges .selected {
  background-color: #3399ff;
  color: #fff;
  outline: 1px dotted #d07a20;
  outline-offset: -1px;
}

.stats {
  margin-top: auto;
  padding-bottom: 6px;
  line-height: 14px;
  white-space: nowrap;
}

.summary {
  display: grid;
  grid-template-columns: 61px 1fr;
  column-gap: 3px;
  margin: 0 0 7px;
}

.summary dt {
  justify-self: end;
}

.summary dd {
  margin: 0;
}

.minmax {
  width: 100%;
  table-layout: fixed;
  border-collapse: collapse;
}

.minmax th,
.minmax td {
  height: 14px;
  padding: 0;
  font-weight: 400;
  text-align: right;
}

.minmax td:last-child {
  padding-left: 3px;
  text-align: left;
}

.minmax .name {
  width: 65px;
}

.minmax .min {
  width: 27px;
}

.minmax .max {
  width: 33px;
}

.minmax .avg {
  width: 27px;
}

/* status bar */
.statusbar {
  flex: none;
  display: flex;
  justify-content: flex-end;
  gap: 2px;
  height: 21px;
  padding-top: 3px;
  border-bottom: 1px solid #333a44;
  color: #7a7a7a;
  font-family: "Open Sans", sans-serif;
  font-size: 11px;
}

.statusbar span {
  height: 17px;
  padding: 0 1px;
  border: 1px solid #999;
  line-height: 16px;
}
```
